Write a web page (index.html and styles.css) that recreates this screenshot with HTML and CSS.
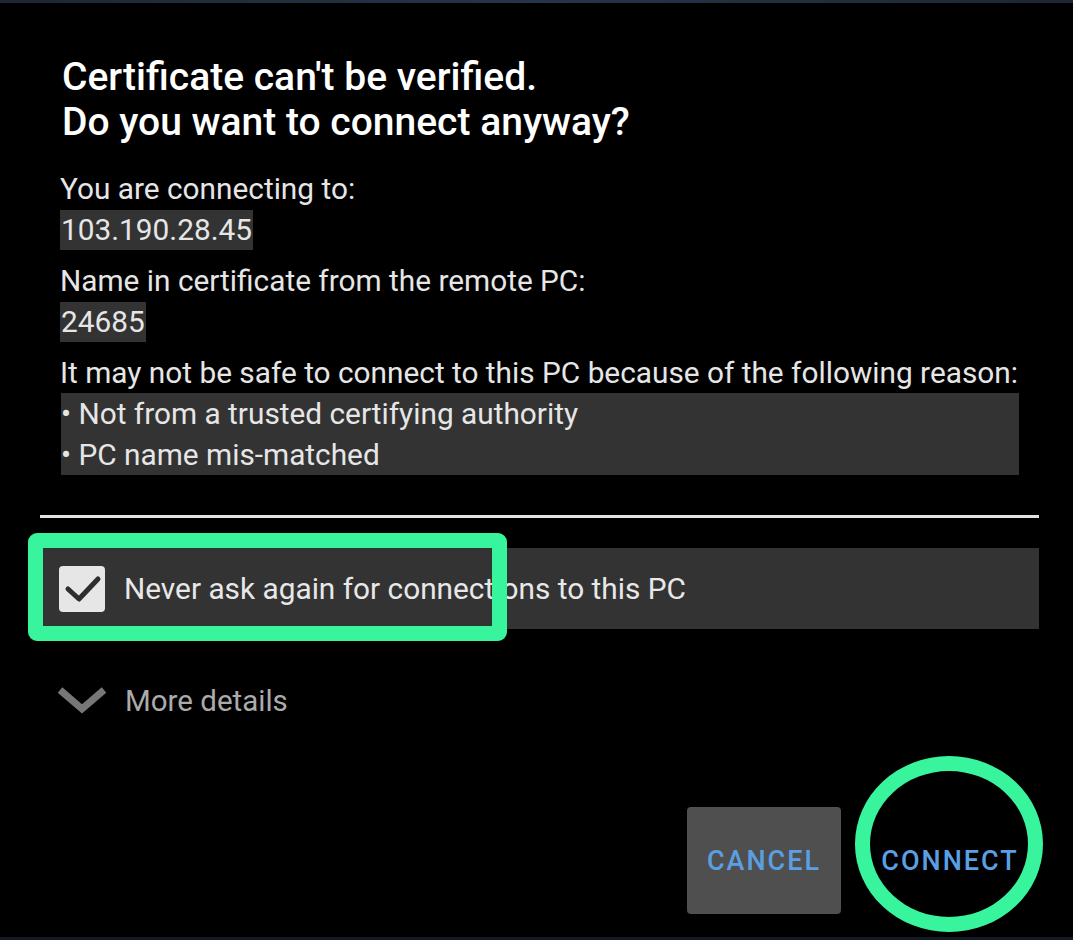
FILE: index.html
```html
<!DOCTYPE html>
<html lang="en">
<head>
    <meta charset="UTF-8">
    <meta name="viewport" content="width=device-width, initial-scale=1.0">
    <title>Certificate warning</title>
    <link rel="stylesheet" href="styles.css">
</head>
<body>
    <div class="edge edge-top"></div>

    <div class="dialog">
        <h1 class="dialog-title">Certificate can't be verified.<br>Do you want to connect anyway?</h1>

        <div class="info">
            <div class="info-group">
                <p class="info-label">You are connecting to:</p>
                <p class="info-value"><span class="mark">103.190.28.45</span></p>
            </div>
            <div class="info-group">
                <p class="info-label">Name in certificate from the remote PC:</p>
                <p class="info-value"><span class="mark">24685</span></p>
            </div>
            <div class="info-group">
                <p class="info-label">It may not be safe to connect to this PC because of the following reason:</p>
                <div class="reasons">
                    <p>• Not from a trusted certifying authority</p>
                    <p>• PC name mis-matched</p>
                </div>
            </div>
        </div>

        <div class="divider"></div>

        <label class="check-row">
            <span class="checkbox">
                <svg viewBox="0 0 46 46" width="46" height="46">
                    <path d="M9 23 L20 33 L39 13" fill="none" stroke="#2e2e2e" stroke-width="5" stroke-linecap="round" stroke-linejoin="round"/>
                </svg>
            </span>
            <span class="check-text">Never ask again for connections to this PC</span>
            <span class="highlight-box"></span>
        </label>

        <div class="more">
            <svg class="more-icon" viewBox="0 0 50 28" width="50" height="28">
                <path d="M3 3 L25 22 L47 3" fill="none" stroke="#777" stroke-width="7"/>
            </svg>
            <span class="more-text">More details</span>
        </div>

        <div class="actions">
            <button class="btn btn-cancel">CANCEL</button>
            <button class="btn btn-connect">
                CONNECT
                <span class="highlight-ring"></span>
            </button>
        </div>
    </div>

    <div class="edge edge-bottom"></div>
</body>
</html>
```

FILE: styles.css
```css
* {
    margin: 0;
    padding: 0;
    box-sizing: border-box;
}

body {
    font-family: 'Roboto', 'Noto Sans', sans-serif;
    background: #000;
    color: #e6e6e6;
    width: 1073px;
    height: 940px;
    overflow: hidden;
    display: flex;
    flex-direction: column;
}

.edge {
    height: 3px;
    background: linear-gradient(90deg, #1d2733 0%, #24364a 50%, #1d2733 100%);
}

.edge-bottom {
    margin-top: auto;
    background: #141a24;
}

.dialog {
    padding: 52px 34px 0 40px;
    display: flex;
    flex-direction: column;
}

.dialog-title {
    font-size: 39px;
    font-weight: 500;
    line-height: 45px;
    color: #fff;
    padding-left: 22px;
}

.info {
    margin-top: 23px;
    padding-left: 20px;
    display: flex;
    flex-direction: column;
    gap: 10px;
}

.info-label,
.info-value,
.reasons p {
    font-size: 29.8px;
    line-height: 41px;
}

.mark {
    background: #333;
    padding: 0 1px;
    display: inline-block;
    line-height: 40px;
}

.reasons {
    background: #333;
    margin: 0 20px 0 1px;
}

.divider {
    margin-top: 40px;
    height: 3px;
    background: #e2e2e2;
}

.check-row {
    position: relative;
    margin: 30px 0 0 3px;
    height: 81px;
    background: #333;
    display: flex;
    align-items: center;
    padding-left: 16px;
    gap: 19px;
}

.checkbox {
    width: 46px;
    height: 46px;
    border-radius: 4px;
    background: #e6e6e6;
    display: flex;
}

.check-text {
    font-size: 29.8px;
    color: #e8e8e8;
}

/* annotation frame drawn over the row */
.highlight-box {
    position: absolute;
    left: -15px;
    top: -15px;
    width: 479px;
    height: 108px;
    border: 15px solid #38f59d;
    border-radius: 9px;
}

.more {
    height: 72px;
    margin-top: 36px;
    display: flex;
    align-items: center;
    padding-left: 17px;
    gap: 18px;
}

.more-text {
    font-size: 29.5px;
    color: #ababab;
}

.actions {
    margin-top: 70px;
    display: flex;
    justify-content: flex-end;
    gap: 32px;
    padding-right: 12px;
}

.btn {
    position: relative;
    width: 154px;
    height: 107px;
    border: none;
    border-radius: 4px;
    font-family: 'Roboto', 'Noto Sans', sans-serif;
    font-size: 27px;
    font-weight: 500;
    letter-spacing: 2px;
    color: #5b9fe3;
    background: transparent;
}

.btn-cancel {
    background: #4f4f4f;
}

.highlight-ring {
    position: absolute;
    left: -18px;
    top: -51px;
    width: 188px;
    height: 176px;
    border: 15px solid #38f59d;
    border-radius: 50%;
}
```
